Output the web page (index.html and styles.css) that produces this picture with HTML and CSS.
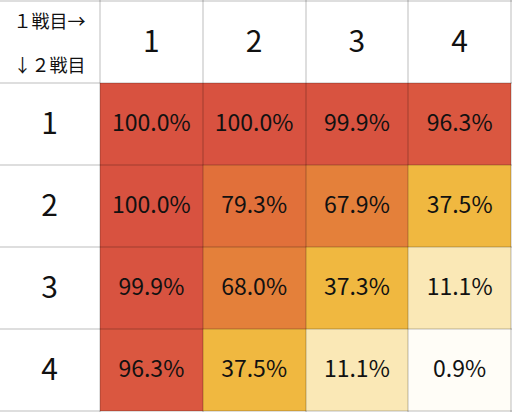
FILE: index.html
```html
<!DOCTYPE html>
<html lang="ja">
<head>
<meta charset="utf-8">
<link rel="stylesheet" href="styles.css">
</head>
<body>
<table class="matrix">
  <colgroup>
    <col class="c-head">
    <col class="c-val"><col class="c-val"><col class="c-val"><col class="c-val">
  </colgroup>
  <tr>
    <th class="corner"><div class="corner-stack"><span>１戦目→</span><span>↓２戦目</span></div></th>
    <th class="num">1</th><th class="num">2</th><th class="num">3</th><th class="num">4</th>
  </tr>
  <tr>
    <th class="num">1</th>
    <td class="v100">100.0%</td><td class="v100">100.0%</td><td class="v99">99.9%</td><td class="v96">96.3%</td>
  </tr>
  <tr>
    <th class="num">2</th>
    <td class="v100">100.0%</td><td class="v79">79.3%</td><td class="v68">67.9%</td><td class="v37">37.5%</td>
  </tr>
  <tr>
    <th class="num">3</th>
    <td class="v99">99.9%</td><td class="v68">68.0%</td><td class="v37">37.3%</td><td class="v11">11.1%</td>
  </tr>
  <tr>
    <th class="num">4</th>
    <td class="v96">96.3%</td><td class="v37">37.5%</td><td class="v11">11.1%</td><td class="v1">0.9%</td>
  </tr>
</table>
</body>
</html>
```
FILE: styles.css
```css
html, body {
  margin: 0;
  padding: 0;
  background: #ffffff;
}
.matrix {
  border-collapse: collapse;
  table-layout: fixed;
  width: 512px;
  font-family: "Noto Sans CJK JP", "Noto Sans", sans-serif;
  color: #111111;
}
.c-head { width: 100px; }
.matrix th, .matrix td {
  border: 2px solid rgba(0, 0, 0, 0.13);
  height: 74px;
  padding: 0 0 6px 0;
  text-align: center;
  vertical-align: middle;
  font-weight: 400;
  line-height: 30px;
}
.matrix tr > :first-child { border-left: none; }
.num { font-size: 30px; }
.matrix td { font-size: 23px; }
.matrix th.corner {
  font-size: 18px;
  height: 80px;
  padding: 0;
}
.corner-stack {
  display: flex;
  flex-direction: column;
  align-items: center;
  gap: 20px;
  line-height: 24px;
}
.v100 { background: #d85240; }
.v99 { background: #d85340; }
.v96 { background: #da5740; }
.v79 { background: #e1703a; }
.v68 { background: #e4803a; }
.v37 { background: #f0b840; }
.v11 { background: #fae8b6; }
.v1 { background: #fffdf7; }
```
